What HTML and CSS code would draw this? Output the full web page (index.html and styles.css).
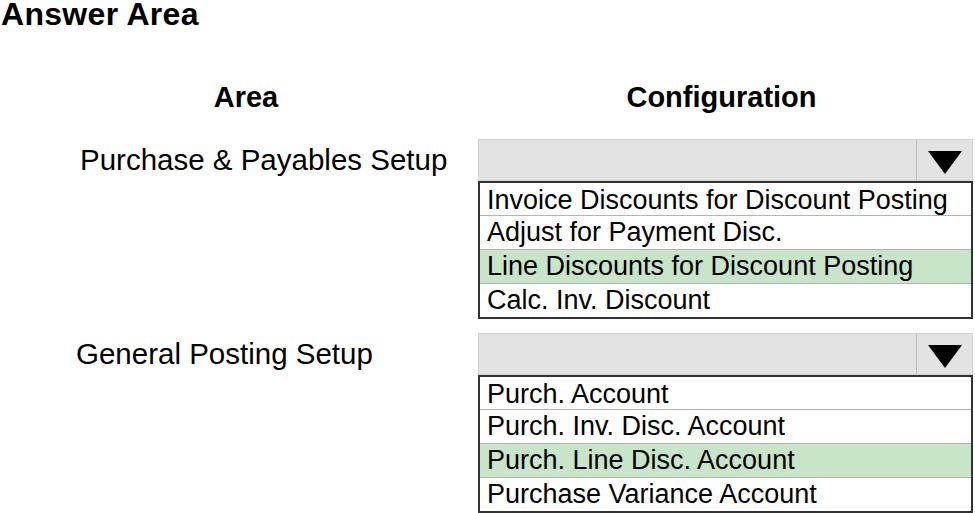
FILE: index.html
```html
<!DOCTYPE html>
<html lang="en">
<head>
    <meta charset="UTF-8">
    <title>Answer Area</title>
    <link rel="stylesheet" href="styles.css">
</head>
<body>

<h1 class="title">Answer Area</h1>

<div class="answer">
    <div class="head">
        <div class="head-area">Area</div>
        <div class="head-config">Configuration</div>
    </div>

    <div class="row">
        <div class="label">Purchase &amp; Payables Setup</div>
        <div class="config">
            <div class="select">
                <div class="value"></div>
                <div class="arrow"><svg width="34" height="23" viewBox="0 0 34 23"><polygon points="0,0 34,0 17,23" fill="#000"/></svg></div>
            </div>
            <ul class="options">
                <li>Invoice Discounts for Discount Posting</li>
                <li>Adjust for Payment Disc.</li>
                <li class="picked">Line Discounts for Discount Posting</li>
                <li>Calc. Inv. Discount</li>
            </ul>
        </div>
    </div>

    <div class="row">
        <div class="label label-2">General Posting Setup</div>
        <div class="config">
            <div class="select">
                <div class="value"></div>
                <div class="arrow"><svg width="34" height="23" viewBox="0 0 34 23"><polygon points="0,0 34,0 17,23" fill="#000"/></svg></div>
            </div>
            <ul class="options">
                <li>Purch. Account</li>
                <li>Purch. Inv. Disc. Account</li>
                <li class="picked">Purch. Line Disc. Account</li>
                <li>Purchase Variance Account</li>
            </ul>
        </div>
    </div>
</div>

</body>
</html>
```

FILE: styles.css
```css
* {
    box-sizing: border-box;
}

body {
    margin: 0;
    background: #fff;
    color: #000;
    font-family: "Liberation Sans", Arial, sans-serif;
}

ul, li {
    margin: 0;
    padding: 0;
    list-style: none;
}

.title {
    margin: 0;
    padding-left: 1px;
    font-size: 32px;
    line-height: 28px;
    font-weight: bold;
    letter-spacing: 0.3px;
}

.answer {
    width: 975px;
}

.head {
    display: flex;
    margin-top: 51px;
    font-size: 29px;
    font-weight: bold;
    line-height: 36px;
}

.head-area {
    width: 478px;
    padding-left: 14px;
    text-align: center;
}

.head-config {
    width: 495px;
    padding-right: 8px;
    text-align: center;
}

.row {
    display: flex;
    margin-top: 24px;
}

.row + .row {
    margin-top: 14px;
}

.label {
    width: 478px;
    padding-left: 80px;
    font-size: 29.5px;
    line-height: 42px;
}

.label-2 {
    padding-left: 76px;
}

.config {
    width: 495px;
}

.select {
    display: flex;
    height: 42px;
    background: #e3e3e3;
    border: 1px solid #d2d2d2;
}

.select .value {
    flex: 1;
}

.select .arrow {
    width: 56px;
    display: flex;
    align-items: center;
    justify-content: center;
    padding-top: 5px;
    border-left: 1px solid #bdbdbd;
}

.options {
    border: 2px solid #333;
    border-top-width: 0;
    font-size: 27px;
}

.options li {
    height: 34px;
    line-height: 33px;
    padding-left: 7px;
    border-top: 1px solid #b4b4b4;
    white-space: nowrap;
}

.options li:first-child {
    border-top: 2px solid #333;
    padding-top: 2px;
    line-height: 30px;
}

.options li.picked {
    background: #c8e4c9;
}
```
